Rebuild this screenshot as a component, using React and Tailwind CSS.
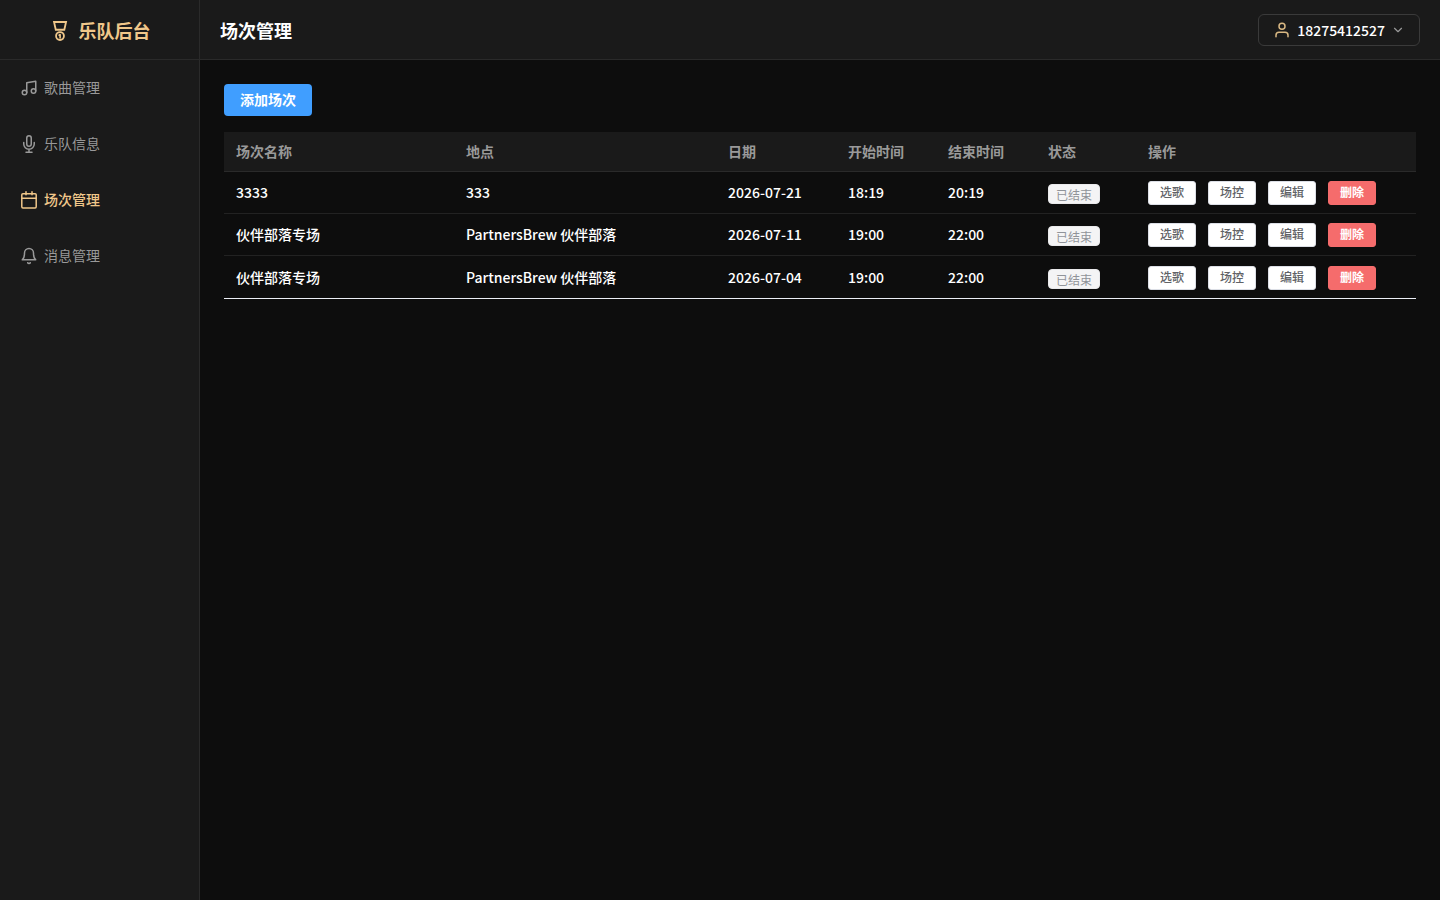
import React from 'react';

const iconProps = {
  viewBox: '0 0 24 24',
  fill: 'none',
  stroke: 'currentColor',
  strokeWidth: 2,
  strokeLinecap: 'round',
  strokeLinejoin: 'round',
  'aria-hidden': true,
};

function MedalIcon() {
  return (
    <svg {...iconProps} className="size-[22px] shrink-0">
      <path d="M5.5 3.3h13.1l-1.9 8.4H7.4z" strokeLinejoin="miter" />
      <circle cx="12" cy="18.6" r="4.3" />
      <path d="M11 17.6l1.1-.6v3.6" strokeWidth="1.8" />
    </svg>
  );
}

function MusicIcon() {
  return (
    <svg {...iconProps} className="size-[18px] shrink-0">
      <path d="M9 18V5l12-2v13" />
      <circle cx="6" cy="18" r="3" />
      <circle cx="18" cy="16" r="3" />
    </svg>
  );
}

function MicIcon() {
  return (
    <svg {...iconProps} className="size-[18px] shrink-0">
      <path d="M12 1a3 3 0 0 0-3 3v8a3 3 0 0 0 6 0V4a3 3 0 0 0-3-3z" />
      <path d="M19 10v2a7 7 0 0 1-14 0v-2M12 19v4M8 23h8" />
    </svg>
  );
}

function CalendarIcon() {
  return (
    <svg {...iconProps} className="size-[18px] shrink-0">
      <rect x="2.4" y="3.6" width="19.2" height="19" rx="1.5" />
      <path d="M8 1v4M16 1v4M2.4 9.8h19.2" />
    </svg>
  );
}

function BellIcon() {
  return (
    <svg {...iconProps} className="size-[18px] shrink-0">
      <path d="M18 8A6 6 0 0 0 6 8c0 7-3 9-3 9h18s-3-2-3-9" />
      <path d="M13.73 21a2 2 0 0 1-3.46 0" />
    </svg>
  );
}

function UserIcon() {
  return (
    <svg {...iconProps} className="size-[18px] shrink-0 text-[#d9b883]">
      <path d="M20 21v-2a4 4 0 0 0-4-4H8a4 4 0 0 0-4 4v2" />
      <circle cx="12" cy="7" r="4" />
    </svg>
  );
}

function ChevronIcon() {
  return (
    <svg {...iconProps} className="size-3.5 shrink-0 text-[#999999]">
      <path d="M6 9l6 6 6-6" />
    </svg>
  );
}

const navItems = [
  { label: '歌曲管理', Icon: MusicIcon },
  { label: '乐队信息', Icon: MicIcon },
  { label: '场次管理', Icon: CalendarIcon, active: true },
  { label: '消息管理', Icon: BellIcon },
];

const columns = [
  { label: '场次名称', width: 'w-[230px]' },
  { label: '地点', width: '' },
  { label: '日期', width: 'w-[120px]' },
  { label: '开始时间', width: 'w-[100px]' },
  { label: '结束时间', width: 'w-[100px]' },
  { label: '状态', width: 'w-[100px]' },
  { label: '操作', width: 'w-[280px]' },
];

const shows = [
  { name: '3333', place: '333', date: '2026-07-21', start: '18:19', end: '20:19' },
  { name: '伙伴部落专场', place: 'PartnersBrew 伙伴部落', date: '2026-07-11', start: '19:00', end: '22:00' },
  { name: '伙伴部落专场', place: 'PartnersBrew 伙伴部落', date: '2026-07-04', start: '19:00', end: '22:00' },
];

function ShowRow({ show, last }) {
  const cell = last
    ? 'h-[43px] border-b border-[#ebeef5] px-3 pt-px'
    : 'h-[42px] border-b border-[#222222] px-3';
  const textCell = `${cell} pb-px`;
  return (
    <tr>
      <td className={textCell}>{show.name}</td>
      <td className={textCell}>{show.place}</td>
      <td className={textCell}>{show.date}</td>
      <td className={textCell}>{show.start}</td>
      <td className={textCell}>{show.end}</td>
      <td className={cell}>
        <div className="flex pt-0.5">
          <span className="flex h-5 items-center rounded border border-[#e9e9eb] bg-[#f4f4f5] px-[7px] pt-0.5 text-xs font-normal text-[#909399]">
            已结束
          </span>
        </div>
      </td>
      <td className={cell}>
        <div className="flex gap-3">
          {['选歌', '场控', '编辑'].map((label) => (
            <button
              key={label}
              type="button"
              className="flex h-6 items-center rounded-[3px] border border-[#dcdfe6] bg-white px-[11px] pb-0.5 text-xs font-medium text-[#606266]"
            >
              {label}
            </button>
          ))}
          <button
            type="button"
            className="flex h-6 items-center rounded-[3px] border border-[#f56c6c] bg-[#f56c6c] px-[11px] pb-0.5 text-xs font-bold text-white"
          >
            删除
          </button>
        </div>
      </td>
    </tr>
  );
}

export default function App() {
  return (
    <div className="flex min-h-screen bg-[#0d0d0d] font-['Noto_Sans_CJK_SC',sans-serif] text-sm text-white">
      <aside className="flex w-[200px] shrink-0 flex-col border-r border-[#2a2a2a] bg-[#1a1a1a]">
        <div className="flex h-[60px] items-center justify-center gap-2 border-b border-[#2a2a2a] text-lg font-bold text-[#f0c78a]">
          <MedalIcon />
          <span>乐队后台</span>
        </div>
        <nav className="flex flex-col">
          {navItems.map(({ label, Icon, active }) => (
            <a
              key={label}
              href="#"
              aria-current={active ? 'page' : undefined}
              className={
                active
                  ? 'flex h-14 items-center gap-1.5 px-5 font-medium text-[#f0c78a]'
                  : 'flex h-14 items-center gap-1.5 px-5 text-[#999999]'
              }
            >
              <Icon />
              <span className="pb-0.5">{label}</span>
            </a>
          ))}
        </nav>
      </aside>
      <div className="flex min-w-0 flex-1 flex-col">
        <header className="flex h-[60px] shrink-0 items-center justify-between border-b border-[#2a2a2a] bg-[#1a1a1a] px-5">
          <h1 className="text-lg font-bold">场次管理</h1>
          <button
            type="button"
            className="flex h-8 items-center gap-1.5 rounded-md border border-[#3a3a3a] px-3.5 font-medium"
          >
            <UserIcon />
            <span>18275412527</span>
            <ChevronIcon />
          </button>
        </header>
        <main className="flex flex-col items-start gap-4 p-6">
          <button
            type="button"
            className="flex h-8 items-center rounded bg-[#409eff] px-4 pb-0.5 font-bold"
          >
            添加场次
          </button>
          <table className="w-full table-fixed border-separate border-spacing-0 text-left">
            <thead>
              <tr>
                {columns.map(({ label, width }) => (
                  <th
                    key={label}
                    scope="col"
                    className={`${width} h-10 border-b border-[#2a2a2a] bg-[#1a1a1a] px-3 pb-px font-bold text-[#999999]`}
                  >
                    {label}
                  </th>
                ))}
              </tr>
            </thead>
            <tbody className="font-medium">
              {shows.map((show, i) => (
                <ShowRow key={show.date} show={show} last={i === shows.length - 1} />
              ))}
            </tbody>
          </table>
        </main>
      </div>
    </div>
  );
}
